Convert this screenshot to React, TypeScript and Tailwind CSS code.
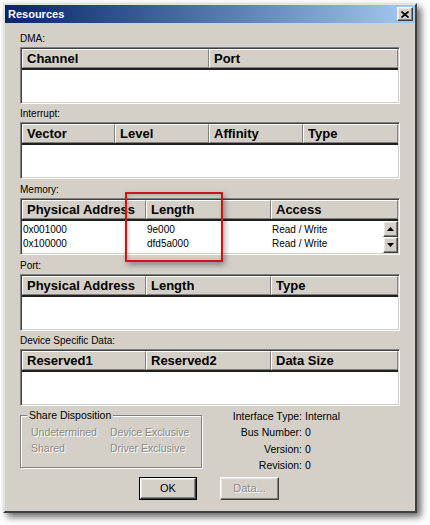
import React from 'react';

const FONT = { fontFamily: '"Liberation Sans", Arial, sans-serif' };

// 3D borders in the classic Windows look
const raised =
  'border border-t-white border-l-white border-r-[#404040] border-b-[#404040] shadow-[inset_-1px_-1px_0_#808080,inset_1px_1px_0_#e8e6e1]';
const sunken =
  'border border-t-[#808080] border-l-[#808080] border-r-white border-b-white shadow-[inset_1px_1px_0_#404040,inset_-1px_-1px_0_#d4d0c8]';
const disabledText = 'text-[#8a8a8a] [text-shadow:1px_1px_0_#ffffff]';

interface Column {
  label: string
  width?: number
}

interface ListViewProps {
  columns: Column[]
  rows?: string[][]
  scroll?: boolean
}

const ListView: React.FC<ListViewProps> = ({ columns, rows = [], scroll = false }) => {
  return (
    <div className={`w-[380px] h-[57px] bg-white p-px flex flex-col ${sunken}`}>
      {/* ヘッダー */}
      <div className="flex h-[19px] bg-[#d4d0c8] shrink-0">
        {columns.map((col, i) => (
          <div
            key={col.label}
            className={`h-full flex items-center pl-[4px] text-[13px] font-bold text-black leading-none border-t border-l border-t-white border-l-white border-r border-r-[#808080] border-b border-b-[#808080] ${i === columns.length - 1 ? 'flex-1' : 'shrink-0'}`}
            style={col.width ? { width: col.width } : undefined}
          >
            {col.label}
          </div>
        ))}
      </div>
      <div className="h-[2px] bg-[#202020] shrink-0" />
      {/* 本体 */}
      <div className="flex flex-1 min-h-0">
        <div className="flex-1 flex flex-col pt-[2px]">
          {rows.map((row, r) => (
            <div key={r} className="flex h-[14px] items-center text-[10px] text-black leading-none">
              {row.map((cell, c) => (
                <div
                  key={c}
                  className={`pl-[1px] ${c === row.length - 1 ? 'flex-1' : 'shrink-0'}`}
                  style={c < columns.length - 1 && columns[c].width ? { width: columns[c].width } : undefined}
                >
                  {cell}
                </div>
              ))}
            </div>
          ))}
        </div>
        {scroll && (
          <div className="w-[15px] flex flex-col shrink-0">
            <button className={`h-[16px] bg-[#d4d0c8] flex items-center justify-center ${raised}`}>
              <svg width="7" height="4" viewBox="0 0 7 4">
                <path d="M3.5 0 L7 4 L0 4 Z" fill="#000" />
              </svg>
            </button>
            <button className={`h-[16px] bg-[#d4d0c8] flex items-center justify-center ${raised}`}>
              <svg width="7" height="4" viewBox="0 0 7 4">
                <path d="M0 0 L7 0 L3.5 4 Z" fill="#000" />
              </svg>
            </button>
          </div>
        )}
      </div>
    </div>
  )
}

const Section: React.FC<{ label: string; className?: string; children: React.ReactNode }> = ({ label, className = '', children }) => (
  <div className={className}>
    <div className="h-[14px] text-[10px] leading-[14px] text-black">{label}</div>
    <div className="mt-px">{children}</div>
  </div>
)

const threeCols = (a: string, b: string, c: string): Column[] => [
  { label: a, width: 124 },
  { label: b, width: 125 },
  { label: c },
]

export default function App() {
  return (
    <div className="relative w-[430px] h-[525px] bg-white overflow-hidden" style={FONT}>
      {/* ウィンドウ */}
      <div className="ml-[3px] pt-[3px]">
        <div className="w-[414px] h-[510px] bg-[#d4d0c8] border-2 border-t-[#e4e2dc] border-l-[#e4e2dc] border-r-[#404040] border-b-[#404040] shadow-[4px_4px_7px_rgba(0,0,0,0.6)] flex flex-col">
          {/* タイトルバー */}
          <div className="h-[18px] bg-gradient-to-r from-[#0a246a] to-[#a6caf0] flex items-center justify-between pl-[3px] pr-[2px] shrink-0">
            <span className="text-white text-[11px] font-bold leading-none">Resources</span>
            <button className={`w-[16px] h-[14px] bg-[#d4d0c8] flex items-center justify-center ${raised}`}>
              <svg width="8" height="7" viewBox="0 0 8 7">
                <path d="M0.5 0.5 L7.5 6.5 M7.5 0.5 L0.5 6.5" stroke="#000" strokeWidth="1.6" />
              </svg>
            </button>
          </div>

          {/* 本文 */}
          <div className="flex flex-col px-[15px] pt-[9px]">
            <Section label="DMA:">
              <ListView columns={[{ label: 'Channel', width: 187 }, { label: 'Port' }]} />
            </Section>
            <Section label="Interrupt:" className="mt-[3px]">
              <ListView
                columns={[
                  { label: 'Vector', width: 93 },
                  { label: 'Level', width: 94 },
                  { label: 'Affinity', width: 94 },
                  { label: 'Type' },
                ]}
              />
            </Section>
            <Section label="Memory:" className="mt-[4px]">
              <ListView
                columns={threeCols('Physical Address', 'Length', 'Access')}
                rows={[
                  ['0x001000', '9e000', 'Read / Write'],
                  ['0x100000', 'dfd5a000', 'Read / Write'],
                ]}
                scroll
              />
            </Section>
            <Section label="Port:" className="mt-[4px]">
              <ListView columns={threeCols('Physical Address', 'Length', 'Type')} />
            </Section>
            <Section label="Device Specific Data:" className="mt-[3px]">
              <ListView columns={threeCols('Reserved1', 'Reserved2', 'Data Size')} />
            </Section>

            {/* 下部 */}
            <div className="flex items-start mt-[2px]">
              <fieldset className="w-[182px] border border-[#808080] shadow-[1px_1px_0_#ffffff,inset_1px_1px_0_#ffffff] pb-[11px]">
                <legend className="ml-[6px] px-[2px] bg-[#d4d0c8] text-[10.5px] leading-[14px] text-black">Share Disposition</legend>
                <div className={`grid grid-cols-[79px_auto] pl-[10px] pt-[2px] text-[10.5px] leading-[16px] ${disabledText}`}>
                  <span>Undetermined</span>
                  <span>Device Exclusive</span>
                  <span>Shared</span>
                  <span>Driver Exclusive</span>
                </div>
              </fieldset>
              <div className="ml-[13px] grid grid-cols-[87px_auto] gap-x-[3px] text-[10.5px] leading-[16.3px] text-black">
                <span className="text-right">Interface Type:</span>
                <span>Internal</span>
                <span className="text-right">Bus Number:</span>
                <span>0</span>
                <span className="text-right">Version:</span>
                <span>0</span>
                <span className="text-right">Revision:</span>
                <span>0</span>
              </div>
            </div>

            {/* ボタン */}
            <div className="flex gap-[23px] pl-[119px] mt-[4px]">
              <button className="w-[58px] h-[23px] border border-black bg-[#d4d0c8] p-0">
                <div className={`w-full h-full flex items-center justify-center text-[11px] text-black ${raised}`}>OK</div>
              </button>
              <button className={`w-[59px] h-[23px] bg-[#d4d0c8] flex items-center justify-center text-[11px] ${raised} ${disabledText}`}>
                Data...
              </button>
            </div>
          </div>
        </div>
      </div>

      {/* 注釈の赤枠 */}
      <div className="absolute left-[125px] top-[192px] w-[98px] h-[70px] border-2 border-[#c9161d] shadow-[2px_3px_6px_rgba(0,0,0,0.35),inset_1px_1px_4px_rgba(0,0,0,0.2)] pointer-events-none" />
    </div>
  )
}
